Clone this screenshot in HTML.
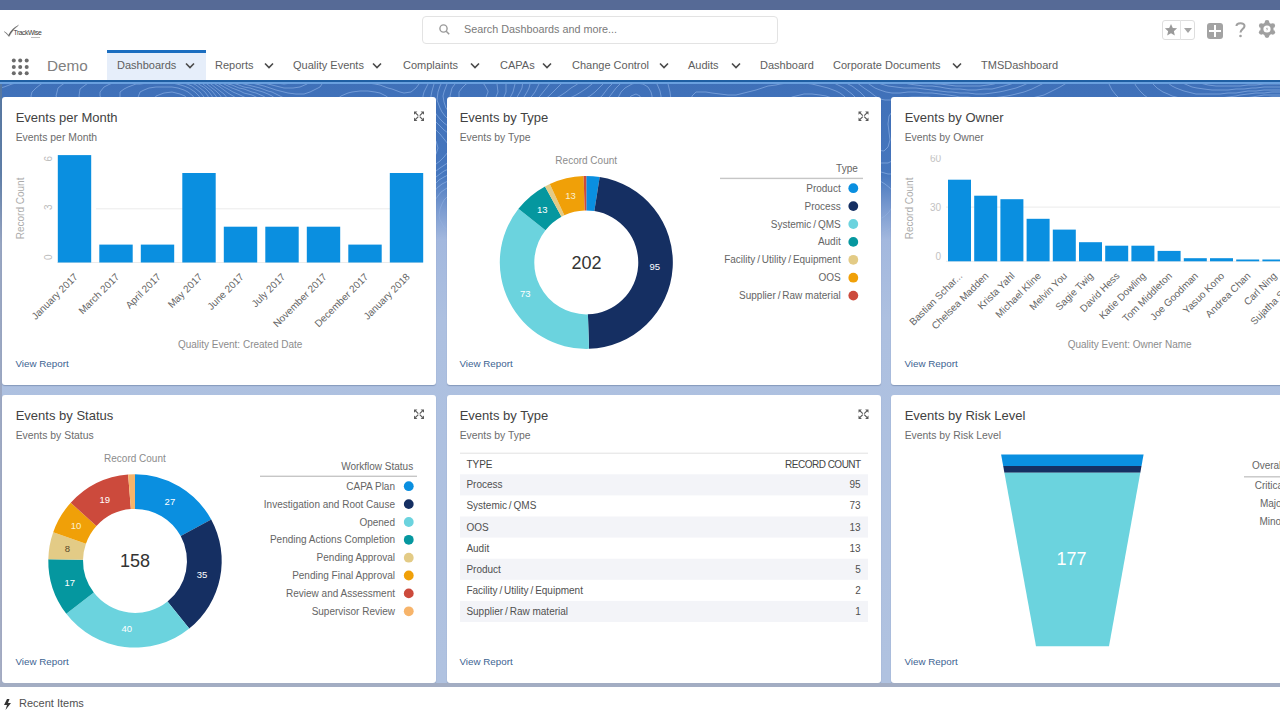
<!DOCTYPE html>
<html><head><meta charset="utf-8">
<style>
*{margin:0;padding:0;box-sizing:border-box}
html,body{width:1280px;height:720px;overflow:hidden;background:#fff;font-family:"Liberation Sans",sans-serif}
.a{position:absolute}
#top{left:0;top:0;width:1280px;height:10px;background:#566a96}
#hdr{left:0;top:10px;width:1280px;height:70px;background:#fff}
#bg{left:0;top:80px;width:1280px;height:603px;background:linear-gradient(180deg,#3f70b8 0px,#4677be 95px,#7c9cd1 130px,#a3b8de 160px,#adc0e0 240px,#b0c2e0 603px);overflow:hidden}
#navline{left:0;top:80px;width:1280px;height:2px;background:#1f5fa3}
#navline2{left:0;top:82px;width:1280px;height:2px;background:#69a0df}
.nv{top:59px;font-size:11px;color:#5e5e5e;white-space:nowrap;line-height:13px}
.chev{top:62px;width:10px;height:7px}
.card{background:#fff;border-radius:3px;box-shadow:0 1px 1px rgba(60,80,120,.35)}
.ttl{font-size:13px;color:#3b3b3b;white-space:nowrap;line-height:15px}
.sub{font-size:10.4px;color:#666;white-space:nowrap;line-height:12px}
.vr{font-size:10px;color:#2a6fb5;white-space:nowrap;line-height:12px}
.ex{width:10px;height:10px}
#foot{left:0;top:683px;width:1280px;height:37px;background:#fff;border-top:4px solid #a3adc3}
</style></head><body>
<div id="top" class="a"></div>
<div id="hdr" class="a"></div>
<div id="bg" class="a"><svg width="1280" height="200" style="position:absolute;left:0;top:0;-webkit-mask-image:linear-gradient(180deg,#000 0,#000 100px,transparent 160px)"><path d="M480 24 L485 20 L488 12 L488 11 L484 4 L480 2 L472 1 L466 4 L462 8 L459 12 L459 20 L462 24 L468 27 L476 26 L480 24 M458 152 L464 150 L468 147 L470 140 L469 132 L468 128 L464 120 L460 116 L456 114 L448 116 L444 120 L442 124 L440 129 L439 136 L440 140 L444 147 L448 150 L455 152 L458 152 M458 0 L455 4 L452 8 L450 16 L452 24 L454 28 L459 32 L464 34 L472 34 L479 32 L484 29 L488 27 L492 23 L496 17 L498 12 L497 4 L495 0 M480 160 L484 157 L488 152 L486 144 L484 139 L480 132 L478 128 L476 123 L472 117 L468 112 L464 108 L460 106 L452 106 L447 108 L441 112 L438 116 L435 120 L432 128 L431 132 L430 140 L432 148 L434 152 L438 156 L444 159 L448 161 L456 162 L464 163 L472 162 L480 160 M450 0 L447 4 L444 12 L443 16 L444 22 L446 28 L449 32 L453 36 L460 39 L464 40 L469 40 L476 39 L482 36 L488 33 L492 30 L496 27 L500 23 L504 17 L506 12 L506 4 M494 168 L500 166 L505 164 L511 160 L514 156 L513 148 L509 144 L504 141 L500 139 L496 136 L492 132 L488 128 L484 123 L480 117 L477 112 L473 108 L469 104 L464 101 L460 99 L452 99 L448 101 L442 104 L437 108 L434 112 L431 116 L428 122 L425 128 L424 132 L422 140 L422 148 L424 153 L428 158 L432 161 L437 164 L444 166 L450 168 L456 169 L464 170 L472 170 L480 170 L488 169 L494 168 M261 0 L268 1 L276 3 L284 4 L292 3 L300 1 M443 0 L440 6 L438 12 L437 20 L440 28 L442 32 L445 36 L449 40 L456 44 L460 45 L468 46 L475 44 L480 42 L484 40 L491 36 L496 32 L500 29 L504 26 L508 21 L511 16 L513 12 L515 4 M493 176 L500 175 L508 173 L512 172 L520 168 L524 166 L528 163 L532 160 L536 155 L538 148 L536 144 L530 140 L524 138 L520 136 L512 134 L508 132 L500 128 L496 125 L492 122 L488 117 L484 112 L481 108 L477 104 L473 100 L468 96 L464 94 L456 93 L448 95 L444 97 L439 100 L435 104 L431 108 L428 112 L424 118 L421 124 L419 128 L416 134 L414 140 L413 148 L416 156 L419 160 L424 163 L428 166 L433 168 L440 171 L445 172 L452 174 L460 175 L468 176 L472 176 L480 177 L488 176 L493 176 M249 0 L256 2 L264 3 L268 4 L276 6 L284 8 L288 8 L293 8 L300 7 L307 4 L312 0 M436 0 L434 4 L432 11 L431 16 L431 24 L433 28 L436 34 L440 39 L444 43 L448 46 L452 48 L460 51 L468 51 L476 49 L480 47 L485 44 L491 40 L496 37 L500 34 L504 31 L508 28 L512 24 L516 19 L520 12 L522 8 L523 0 M370 44 L376 41 L380 38 L382 32 L380 25 L376 22 L368 20 L360 21 L353 24 L349 28 L348 32 L348 36 L352 40 L359 44 L364 45 L370 44 M226 120 L228 116 L230 108 L230 100 L228 92 L225 88 L220 88 L216 90 L212 95 L210 100 L209 108 L212 116 L215 120 L220 123 L226 120 M506 180 L512 179 L520 176 L524 175 L530 172 L536 169 L540 166 L544 163 L548 159 L552 154 L555 148 L552 141 L548 138 L544 136 L536 133 L532 132 L524 130 L517 128 L512 126 L507 124 L500 120 L496 117 L492 113 L488 109 L484 104 L481 100 L477 96 L473 92 L468 89 L464 87 L456 87 L451 88 L444 91 L440 94 L436 97 L432 100 L428 104 L424 109 L420 115 L416 120 L414 124 L411 128 L408 134 L405 140 L404 144 L404 152 L406 156 L409 160 L414 164 L420 167 L424 169 L430 172 L436 174 L443 176 L448 177 L456 179 L462 180 L468 181 L476 182 L484 182 L492 182 L500 181 L506 180 M248 164 L251 156 L248 152 L242 152 L240 156 L241 160 L247 164 L248 164 M53 180 L59 176 L61 172 L59 168 L52 166 L44 166 L39 168 L33 172 L29 176 L27 180 L32 184 L40 183 L48 182 L53 180 M7 200 L8 196 L4 192 L0 192 M239 0 L244 1 L252 3 L256 4 L264 6 L270 8 L276 10 L284 12 L288 13 L296 14 L304 14 L310 12 L316 9 L320 7 L324 1 M430 0 L428 4 L424 12 L423 16 L423 24 L425 28 L428 33 L432 38 L436 42 L440 46 L444 50 L448 53 L453 56 L460 59 L468 59 L474 56 L480 52 L484 50 L488 47 L492 44 L497 40 L503 36 L508 32 L512 29 L516 26 L520 22 L524 17 L527 12 L529 8 L531 0 M373 52 L380 49 L384 46 L388 43 L392 38 L395 32 L394 24 L391 20 L386 16 L380 13 L375 12 L368 11 L360 11 L352 12 L348 13 L341 16 L336 20 L333 24 L331 28 L331 36 L333 40 L337 44 L344 48 L348 50 L354 52 L360 53 L368 53 L373 52 M250 172 L256 168 L259 164 L260 156 L257 148 L254 144 L250 140 L245 136 L241 132 L239 128 L237 120 L237 112 L237 104 L237 96 L236 89 L234 84 L231 80 L224 77 L218 80 L213 84 L210 88 L207 92 L204 100 L204 104 L204 112 L205 116 L208 123 L211 128 L215 132 L220 136 L223 140 L226 144 L228 149 L230 156 L232 161 L236 167 L240 170 L244 172 L250 172 M511 184 L516 183 L524 181 L528 179 L536 176 L540 174 L544 172 L550 168 L555 164 L559 160 L563 156 L566 152 L568 145 L568 144 L564 138 L560 135 L553 132 L548 131 L540 128 L536 127 L528 125 L523 124 L516 122 L511 120 L504 116 L500 113 L496 110 L492 105 L488 100 L485 96 L482 92 L478 88 L473 84 L468 80 L464 78 L456 79 L452 80 L446 84 L440 88 L436 91 L432 94 L428 98 L424 102 L420 107 L416 112 L412 116 L409 120 L406 124 L403 128 L400 132 L396 139 L394 144 L394 152 L396 156 L400 161 L404 164 L410 168 L416 171 L420 172 L428 175 L432 177 L440 179 L444 180 L452 182 L460 184 L464 185 L472 186 L480 186 L488 187 L496 186 L504 185 L511 184 M19 200 L23 196 L28 193 L32 191 L40 188 L44 187 L52 184 L56 183 L61 180 L65 176 L66 168 L61 164 L56 162 L48 162 L40 164 L36 165 L31 168 L25 172 L20 176 L16 179 L12 181 L4 183 L0 184 M1025 200 L1020 198 L1012 199 M232 0 L236 2 L244 4 L248 5 L256 7 L260 8 L268 11 L272 12 L280 16 L284 18 L288 21 L292 25 L294 32 L292 39 L291 44 L288 52 L287 56 L288 61 L296 62 L300 60 L305 56 L312 53 L316 52 L324 52 L328 52 L336 54 L341 56 L348 58 L356 60 L360 60 L367 60 L372 59 L380 57 L384 55 L388 52 L393 48 L398 44 L403 40 L408 36 L412 35 L417 36 L424 40 L428 43 L432 47 L436 50 L440 54 L444 59 L448 64 L449 68 L448 72 L444 77 L440 81 L436 84 L432 88 L428 92 L423 96 L419 100 L416 104 L412 108 L408 112 L404 116 L400 121 L396 124 L392 129 L388 133 L384 140 L383 144 L384 152 L386 156 L389 160 L394 164 L400 168 L404 170 L409 172 L416 175 L420 177 L428 179 L432 181 L440 183 L444 184 L452 186 L459 188 L464 189 L472 190 L480 191 L488 191 L496 191 L504 190 L512 188 L516 188 L524 185 L529 184 L536 181 L540 180 L548 176 L552 174 L556 172 L562 168 L567 164 L571 160 L574 156 L577 152 L580 144 L576 138 L572 135 L567 132 L560 129 L556 128 L548 126 L542 124 L536 123 L528 121 L524 119 L516 117 L512 115 L507 112 L502 108 L498 104 L495 100 L492 96 L488 91 L484 85 L480 80 L478 76 L476 70 L476 68 L480 60 L484 56 L488 52 L492 49 L496 45 L500 42 L504 39 L508 36 L514 32 L519 28 L524 24 L528 20 L532 16 L535 12 L537 8 L540 2 M422 0 L419 4 L416 8 L411 12 L404 13 L400 12 L392 9 L388 8 L380 5 L375 4 L368 3 L360 2 L352 1 L348 0 M252 176 L259 172 L262 168 L264 164 L265 156 L264 148 L263 144 L260 139 L256 134 L252 129 L248 124 L247 120 L245 112 L244 104 L244 96 L244 92 L242 84 L240 78 L236 73 L232 70 L224 70 L220 72 L214 76 L210 80 L207 84 L204 89 L201 96 L200 100 L199 108 L200 116 L201 120 L204 127 L207 132 L210 136 L214 140 L217 144 L220 149 L224 156 L226 160 L228 164 L232 170 L236 173 L242 176 L248 177 L252 176 M27 200 L32 196 L36 194 L41 192 L48 189 L52 188 L60 184 L64 182 L68 179 L72 172 L68 164 L64 161 L60 160 L52 159 L44 160 L40 161 L32 164 L28 166 L24 168 L18 172 L12 175 L8 177 L0 180 M1035 200 L1032 196 L1026 192 L1020 191 L1014 192 L1008 195 L1004 197 M226 0 L232 3 L236 4 L244 7 L250 8 L256 10 L263 12 L268 14 L272 16 L277 20 L280 24 L282 32 L280 40 L279 44 L276 51 L274 56 L272 62 L270 68 L269 76 L271 84 L274 88 L280 91 L288 89 L292 87 L296 84 L300 79 L304 75 L308 71 L312 68 L319 64 L324 63 L332 63 L340 64 L344 65 L352 66 L360 67 L368 67 L376 65 L380 64 L388 60 L392 57 L396 55 L400 52 L407 48 L412 46 L420 47 L424 49 L428 52 L432 56 L436 61 L438 68 L436 74 L432 80 L428 84 L424 88 L420 92 L416 96 L412 100 L408 104 L404 107 L400 111 L396 114 L392 117 L388 120 L383 124 L379 128 L376 132 L372 140 L372 144 L372 148 L376 156 L379 160 L384 164 L388 166 L392 169 L399 172 L404 174 L408 176 L416 179 L420 180 L428 183 L432 184 L440 187 L444 188 L452 191 L458 192 L464 194 L472 195 L480 196 L488 196 L496 195 L504 194 L512 193 L516 192 L524 190 L530 188 L536 186 L542 184 L548 182 L552 180 L560 176 L564 174 L568 171 L573 168 L578 164 L582 160 L585 156 L588 152 L590 144 L588 139 L584 135 L579 132 L572 129 L568 127 L560 125 L556 124 L548 121 L543 120 L536 118 L528 116 L524 115 L518 112 L512 109 L508 106 L504 102 L500 97 L496 92 L494 88 L491 84 L488 77 L486 72 L486 64 L488 60 L492 54 L496 50 L500 46 L504 43 L508 40 L514 36 L520 32 L524 29 L528 26 L532 23 L536 20 L540 16 L544 11 L548 6 L552 0 M408 0 L404 1 L396 1 L391 0 M1280 38 L1274 40 L1271 44 L1275 48 L1280 49 M251 180 L256 178 L260 176 L264 172 L268 165 L270 160 L270 152 L269 144 L268 139 L265 132 L263 128 L260 123 L256 116 L255 112 L254 104 L254 96 L254 88 L252 81 L250 76 L247 72 L243 68 L236 64 L232 63 L224 64 L220 66 L216 69 L212 72 L208 77 L204 82 L200 88 L198 92 L196 100 L195 104 L195 112 L196 117 L198 124 L200 129 L204 136 L207 140 L210 144 L213 148 L216 153 L220 160 L223 164 L225 168 L229 172 L234 176 L240 179 L244 180 L251 180 M845 128 L851 124 L854 120 L853 112 L849 108 L844 106 L836 104 L828 106 L822 108 L816 112 L813 116 L811 120 L812 124 L817 128 L824 130 L832 131 L840 130 L845 128 M34 200 L40 196 L44 194 L50 192 L56 189 L60 188 L67 184 L72 180 L75 176 L76 172 L76 168 L72 163 L68 160 L60 157 L52 156 L44 157 L36 159 L32 161 L26 164 L20 167 L16 169 L11 172 L4 175 M1041 200 L1040 196 L1036 190 L1032 186 L1027 184 L1020 183 L1016 184 L1009 188 L1004 191 L1000 195 L996 198 M221 0 L228 4 L232 5 L239 8 L244 9 L252 12 L256 13 L263 16 L268 19 L272 24 L274 28 L273 36 L272 40 L269 48 L266 52 L264 56 L260 60 L252 62 L246 60 L240 58 L232 56 L224 58 L220 61 L216 64 L211 68 L208 72 L204 76 L200 82 L196 88 L195 92 L192 100 L192 104 L192 112 L192 116 L194 124 L196 130 L199 136 L202 140 L204 144 L208 149 L212 155 L215 160 L218 164 L220 168 L224 172 L228 176 L234 180 L240 182 L248 183 L256 182 L260 180 L265 176 L268 172 L272 165 L274 160 L275 152 L276 144 L275 136 L275 128 L276 120 L278 116 L282 112 L287 108 L292 104 L296 101 L300 97 L304 92 L307 88 L310 84 L314 80 L319 76 L324 74 L332 72 L340 72 L348 74 L356 75 L364 75 L372 75 L380 72 L384 71 L389 68 L395 64 L400 61 L404 59 L411 56 L416 56 L420 57 L424 60 L428 67 L428 70 L426 76 L423 80 L420 84 L415 88 L411 92 L406 96 L401 100 L396 103 L392 106 L388 108 L382 112 L376 116 L372 119 L368 123 L364 128 L362 132 L361 140 L362 148 L364 152 L368 158 L372 161 L376 164 L382 168 L388 171 L392 173 L399 176 L404 178 L409 180 L416 182 L420 184 L428 187 L432 188 L440 191 L444 192 L452 195 L456 196 L464 199 L472 200 M494 200 L500 199 L508 198 L516 196 L520 195 L528 193 L532 192 L540 189 L544 188 L552 185 L556 183 L564 180 L568 178 L572 176 L578 172 L584 168 L588 164 L592 161 L596 156 L598 152 L600 148 L600 143 L596 137 L592 134 L588 131 L582 128 L576 126 L571 124 L564 122 L557 120 L552 119 L544 116 L540 115 L532 113 L528 111 L521 108 L516 105 L512 102 L508 98 L504 92 L501 88 L499 84 L496 78 L494 72 L493 64 L496 57 L499 52 L503 48 L508 44 L512 41 L516 38 L520 35 L525 32 L532 28 L536 25 L540 22 L544 20 L549 16 L553 12 L557 8 L561 4 L566 0 M1280 33 L1272 35 L1267 36 L1261 40 L1260 44 L1261 48 L1268 52 L1272 53 L1280 55 M849 136 L856 133 L860 130 L864 126 L867 120 L865 112 L863 108 L859 104 L852 100 L848 98 L840 97 L832 97 L824 100 L820 101 L815 104 L809 108 L804 112 L800 116 L798 120 L799 128 L803 132 L808 135 L812 136 L820 138 L828 139 L836 139 L844 137 L849 136 M41 200 L48 196 L52 194 L57 192 L64 189 L68 187 L72 184 L77 180 L80 174 L80 168 L78 164 L74 160 L68 157 L64 155 L56 154 L48 154 L40 156 L36 157 L28 160 L24 162 L20 164 L12 168 L8 170 L2 172 M1048 200 L1045 192 L1043 188 L1040 184 L1036 180 L1028 176 L1024 176 L1019 176 L1012 179 L1008 182 L1004 185 L1000 189 L996 193 L992 197 M217 0 L224 4 L228 6 L232 8 L240 11 L244 13 L252 15 L256 17 L261 20 L265 24 L267 32 L264 40 L262 44 L258 48 L252 51 L244 51 L236 50 L228 51 L224 53 L219 56 L215 60 L211 64 L207 68 L203 72 L200 76 L196 82 L193 88 L191 92 L189 100 L188 105 L188 112 L188 116 L190 124 L192 130 L194 136 L197 140 L200 146 L204 152 L207 156 L210 160 L213 164 L216 168 L220 173 L224 177 L229 180 L236 184 L240 185 L248 186 L256 185 L260 183 L265 180 L269 176 L272 172 L276 165 L278 160 L280 153 L281 148 L283 140 L284 136 L287 128 L290 124 L294 120 L298 116 L302 112 L306 108 L310 104 L313 100 L316 96 L320 91 L324 88 L332 84 L336 83 L344 84 L348 85 L356 87 L361 88 L368 90 L372 92 L372 96 L368 101 L364 105 L360 109 L356 114 L352 120 L351 124 L349 132 L349 140 L352 148 L354 152 L357 156 L361 160 L366 164 L372 168 L376 170 L380 172 L388 175 L392 177 L400 180 L404 182 L411 184 L416 186 L421 188 L428 191 L432 192 L440 196 L444 197 L450 200 M516 200 L520 199 L528 197 L532 195 L540 193 L544 192 L552 189 L556 188 L564 185 L568 183 L575 180 L580 178 L584 176 L590 172 L595 168 L600 164 L604 160 L607 156 L609 152 L610 144 L608 139 L604 135 L600 132 L592 128 L588 126 L582 124 L576 122 L570 120 L564 118 L556 116 L552 115 L544 112 L540 111 L532 108 L528 106 L524 104 L519 100 L515 96 L512 92 L508 86 L505 80 L503 76 L500 68 L500 64 L500 60 L504 53 L508 48 L512 45 L516 41 L520 39 L524 36 L531 32 L536 29 L540 27 L546 24 L552 20 L556 18 L560 16 L566 12 L571 8 L576 5 L580 2 M1280 30 L1272 31 L1266 32 L1260 34 L1256 36 L1252 40 L1251 48 L1256 52 L1260 54 L1265 56 L1272 57 L1280 59 M400 85 L392 85 L392 84 L396 79 L400 76 L407 72 L409 72 L408 79 L404 82 L400 85 M848 144 L852 143 L860 140 L864 138 L868 136 L872 132 L876 128 L879 120 L877 112 L874 108 L871 104 L865 100 L860 96 L856 94 L850 92 L844 90 L836 90 L829 92 L824 94 L819 96 L812 100 L808 102 L804 104 L798 108 L793 112 L789 116 L786 120 L785 128 L788 133 L792 136 L799 140 L804 142 L812 144 L816 145 L824 146 L832 146 L840 145 L848 144 M47 200 L52 197 L56 195 L64 192 L68 190 L72 188 L78 184 L82 180 L84 176 L84 168 L82 164 L79 160 L73 156 L68 154 L60 152 L56 152 L48 152 L44 152 L36 155 L32 156 L24 160 L20 162 L15 164 L8 167 L4 169 M1054 200 L1053 192 L1052 188 L1048 182 L1044 177 L1040 174 L1036 171 L1028 168 L1024 167 L1016 168 L1012 170 L1008 173 L1004 178 L1000 182 L996 187 L992 191 L988 195 L984 199 M213 0 L219 4 L224 7 L228 9 L233 12 L240 15 L244 17 L251 20 L256 24 L258 28 L257 36 L253 40 L248 42 L240 43 L232 44 L228 45 L224 48 L218 52 L214 56 L210 60 L206 64 L203 68 L199 72 L196 76 L192 82 L189 88 L187 92 L185 100 L184 108 L184 116 L186 124 L188 131 L190 136 L192 140 L196 147 L199 152 L202 156 L205 160 L208 165 L212 169 L216 174 L220 177 L224 180 L231 184 L236 186 L244 188 L248 188 L252 188 L260 186 L264 184 L269 180 L273 176 L276 172 L280 165 L283 160 L284 156 L288 148 L290 144 L292 140 L296 135 L300 131 L305 128 L312 124 L316 122 L324 122 L328 124 L332 131 L334 136 L337 140 L340 146 L344 151 L348 156 L352 160 L356 163 L360 165 L364 168 L372 172 L376 174 L381 176 L388 179 L392 181 L400 184 L404 185 L412 188 L416 190 L421 192 L428 195 L432 197 L437 200 M529 200 L536 198 L542 196 L548 194 L555 192 L560 190 L568 188 L572 186 L579 184 L584 182 L588 180 L596 176 L600 173 L604 171 L608 167 L612 164 L616 159 L620 153 L622 148 L620 141 L616 136 L612 133 L608 131 L602 128 L596 125 L592 124 L584 121 L580 120 L572 117 L568 116 L560 113 L556 112 L548 109 L544 108 L536 104 L532 102 L528 100 L524 96 L520 92 L516 86 L512 80 L510 76 L508 72 L505 64 L507 56 L509 52 L513 48 L517 44 L523 40 L528 37 L532 35 L538 32 L544 29 L548 27 L555 24 L560 22 L565 20 L572 17 L576 15 L581 12 L587 8 L592 4 L596 1 M841 48 L844 44 L846 36 L844 28 L841 24 L836 20 L832 18 L826 16 L820 15 L812 14 L804 14 L796 16 L792 17 L787 20 L786 28 L789 32 L795 36 L800 38 L804 41 L810 44 L816 47 L820 48 L828 51 L836 51 L841 48 M1280 27 L1272 27 L1268 28 L1260 30 L1254 32 L1248 35 L1244 39 L1241 44 L1244 51 L1248 54 L1252 56 L1260 59 L1266 60 L1272 61 L1280 62 M980 104 L983 96 L982 88 L981 80 L980 76 L978 68 L976 64 L972 58 L968 54 L964 51 L960 48 L952 44 L948 43 L940 41 L932 40 L924 43 L920 48 L919 52 L919 60 L920 64 L922 72 L924 77 L928 84 L931 88 L936 92 L940 94 L944 96 L952 99 L956 100 L964 103 L969 104 L976 105 L980 104 M848 152 L852 151 L860 149 L864 148 L872 144 L876 142 L880 139 L885 136 L889 132 L892 127 L895 120 L893 112 L890 108 L885 104 L880 101 L876 98 L872 96 L865 92 L860 89 L856 87 L848 84 L844 83 L836 84 L832 85 L824 88 L820 90 L816 92 L809 96 L804 99 L800 101 L795 104 L789 108 L784 111 L780 114 L776 118 L772 123 L770 128 L772 133 L776 137 L780 140 L787 144 L792 146 L798 148 L804 150 L812 151 L816 152 L824 153 L832 153 L840 153 L848 152 M54 200 L60 197 L64 195 L70 192 L76 189 L80 186 L84 183 L88 177 L89 172 L88 167 L84 161 L80 157 L76 155 L70 152 L64 150 L56 149 L48 150 L40 151 L36 152 L28 155 L24 157 L18 160 L12 163 L8 164 L0 167 M1062 200 L1061 192 L1060 186 L1056 180 L1053 176 L1049 172 L1044 168 L1040 165 L1036 162 L1032 160 L1024 157 L1020 156 L1016 156 L1009 160 L1005 164 L1003 168 L1000 172 L996 178 L992 184 L989 188 L985 192 L981 196 L977 200 M867 200 L860 197 L856 196 L848 195 L840 195 L832 196 L828 197 L824 200 M209 0 L215 4 L220 7 L224 10 L228 13 L233 16 L239 20 L243 24 L245 28 L242 32 L236 35 L232 37 L227 40 L222 44 L217 48 L213 52 L209 56 L206 60 L202 64 L198 68 L195 72 L192 76 L188 82 L185 88 L183 92 L181 100 L180 108 L181 116 L182 124 L184 132 L186 136 L188 142 L191 148 L194 152 L196 156 L200 161 L204 166 L208 171 L212 175 L216 178 L220 181 L225 184 L232 187 L236 189 L244 190 L252 190 L260 188 L264 186 L268 184 L273 180 L277 176 L280 172 L284 166 L288 160 L291 156 L293 152 L297 148 L302 144 L308 141 L316 141 L323 144 L328 147 L332 151 L336 154 L340 158 L344 161 L349 164 L355 168 L360 170 L364 172 L372 176 L376 178 L382 180 L388 182 L392 184 L400 187 L404 189 L411 192 L416 194 L420 196 L426 200 M541 200 L548 198 L555 196 L560 194 L568 192 L572 191 L580 188 L584 187 L592 184 L596 182 L602 180 L608 177 L612 174 L616 172 L621 168 L625 164 L629 160 L632 156 L634 148 L632 141 L628 137 L624 134 L620 132 L613 128 L608 126 L603 124 L596 121 L592 120 L584 117 L580 116 L572 113 L568 112 L560 109 L556 108 L548 105 L544 103 L539 100 L534 96 L530 92 L527 88 L524 84 L520 79 L516 74 L512 68 L511 64 L512 56 L514 52 L517 48 L522 44 L528 40 L532 38 L536 36 L544 32 L548 31 L555 28 L560 26 L568 24 L572 23 L580 20 L584 19 L590 16 L595 12 L599 8 L603 4 L607 0 M1070 200 L1072 192 L1070 184 L1068 180 L1064 176 L1060 172 L1056 168 L1051 164 L1046 160 L1041 156 L1036 152 L1032 149 L1028 145 L1024 141 L1021 136 L1020 132 L1020 124 L1020 119 L1021 112 L1022 104 L1021 96 L1020 91 L1018 84 L1016 79 L1013 72 L1010 68 L1008 64 L1004 60 L1000 56 L995 52 L989 48 L984 46 L980 44 L972 41 L968 40 L960 37 L956 36 L948 34 L940 33 L936 32 L928 32 L924 32 L916 36 L912 40 L910 44 L909 52 L909 60 L909 68 L909 76 L908 83 L906 88 L901 92 L896 94 L888 94 L881 92 L876 90 L871 88 L864 84 L860 82 L856 79 L850 76 L844 72 L840 68 L844 63 L848 57 L851 52 L853 48 L855 40 L855 32 L852 24 L848 20 L844 16 L840 13 L836 11 L828 8 L824 7 L816 5 L812 4 L804 3 L796 3 L788 3 L780 4 L776 5 L768 6 L762 8 L756 10 L748 12 L744 13 L736 15 L728 15 L720 14 L712 13 L706 12 L700 12 L696 12 L692 16 L692 24 L696 26 L704 27 L712 26 L720 26 L728 25 L736 25 L744 27 L748 28 L756 30 L761 32 L768 34 L773 36 L780 38 L784 40 L792 43 L796 45 L803 48 L808 50 L812 52 L819 56 L824 59 L828 62 L832 64 L840 68 L835 72 L831 76 L825 80 L820 84 L816 87 L812 89 L807 92 L801 96 L796 99 L792 101 L786 104 L780 108 L776 110 L772 112 L766 116 L760 120 L756 124 L754 128 L755 136 L759 140 L764 144 L768 146 L773 148 L780 151 L784 152 L792 155 L796 157 L804 159 L808 160 L816 162 L824 164 L828 165 L836 165 L844 165 L849 164 L856 163 L864 160 L868 159 L875 156 L880 154 L884 152 L892 148 L896 146 L900 144 L907 140 L912 137 L916 135 L924 133 L929 132 L936 131 L944 132 L952 132 L956 132 L964 133 L972 135 L976 136 L984 140 L988 142 L992 146 L995 152 L995 160 L994 168 L992 173 L988 180 L985 184 L982 188 L978 192 L974 196 L969 200 M1280 24 L1272 25 L1264 26 L1256 28 L1252 29 L1245 32 L1240 35 L1236 38 L1232 43 L1231 48 L1234 52 L1239 56 L1244 58 L1250 60 L1256 61 L1264 63 L1272 64 L1276 64 M60 200 L68 196 L72 194 L76 192 L83 188 L88 184 L91 180 L93 176 L93 168 L91 164 L88 160 L84 156 L77 152 L72 150 L65 148 L60 147 L52 147 L44 148 L40 149 L32 151 L28 153 L21 156 L16 158 L12 160 L4 163 L0 165 M906 200 L902 196 L896 192 L892 190 L887 188 L880 186 L875 184 L868 182 L860 180 L856 179 L848 178 L840 178 L832 179 L828 180 L820 182 L816 184 L809 188 L805 192 L802 196 M205 0 L211 4 L216 8 L220 11 L224 14 L228 19 L231 24 L228 32 L224 36 L220 40 L216 44 L213 48 L209 52 L205 56 L202 60 L198 64 L194 68 L191 72 L188 76 L184 81 L180 88 L178 92 L176 100 L176 104 L176 112 L176 116 L178 124 L180 132 L181 136 L184 144 L186 148 L188 152 L192 159 L196 164 L199 168 L203 172 L208 176 L212 179 L216 182 L220 184 L228 188 L232 190 L240 192 L244 192 L252 192 L256 192 L264 189 L268 187 L272 184 L277 180 L281 176 L284 172 L288 168 L292 163 L296 159 L300 156 L308 152 L316 153 L324 155 L328 157 L332 160 L339 164 L344 167 L348 169 L354 172 L360 175 L364 176 L372 180 L376 181 L383 184 L388 186 L393 188 L400 191 L404 193 L410 196 L416 200 M553 200 L560 198 L568 196 L572 195 L580 193 L584 192 L592 189 L596 188 L604 185 L608 184 L616 181 L620 179 L625 176 L632 172 L636 169 L640 166 L644 162 L648 157 L651 152 L650 144 L647 140 L641 136 L636 133 L632 131 L625 128 L620 126 L615 124 L608 122 L603 120 L596 118 L591 116 L584 114 L579 112 L572 109 L568 108 L560 105 L556 103 L551 100 L545 96 L541 92 L537 88 L533 84 L529 80 L525 76 L522 72 L519 68 L516 60 L516 60 L519 52 L522 48 L527 44 L532 41 L536 39 L542 36 L548 34 L553 32 L560 30 L568 28 L572 27 L580 26 L587 24 L592 22 L597 20 L602 16 L605 12 L608 8 L612 4 M666 0 L668 4 L670 12 L671 20 L671 28 L672 32 L676 36 L684 39 L692 40 L700 40 L708 39 L716 38 L724 38 L732 38 L740 38 L748 38 L756 39 L761 40 L768 41 L776 43 L780 45 L788 47 L792 49 L799 52 L804 55 L808 57 L812 60 L817 64 L820 72 L816 79 L812 83 L808 86 L804 89 L800 92 L793 96 L788 98 L784 101 L777 104 L772 106 L768 108 L760 112 L756 113 L750 116 L744 119 L740 122 L736 124 L732 128 L730 136 L732 140 L736 144 L743 148 L748 150 L752 152 L760 155 L764 157 L772 160 L776 162 L781 164 L787 168 L790 172 L790 180 L788 185 L786 192 L787 200 M1083 200 L1085 196 L1087 188 L1084 181 L1080 177 L1076 173 L1072 170 L1068 167 L1064 164 L1058 160 L1053 156 L1049 152 L1045 148 L1042 144 L1039 140 L1036 132 L1037 124 L1039 116 L1041 112 L1044 105 L1047 100 L1048 96 L1050 88 L1050 80 L1048 72 L1047 68 L1044 63 L1040 58 L1036 54 L1032 51 L1027 48 L1020 45 L1016 43 L1008 41 L1004 40 L996 38 L988 36 L984 35 L976 34 L968 32 L964 31 L956 30 L948 28 L944 27 L936 26 L928 26 L920 27 L914 28 L908 31 L904 35 L901 40 L900 47 L900 52 L900 56 L900 64 L900 68 L897 76 L894 80 L888 83 L880 83 L872 80 L868 78 L864 75 L860 70 L858 64 L859 56 L861 52 L863 44 L864 38 L864 35 L863 28 L860 23 L856 18 L852 14 L848 11 L844 8 L836 4 L832 2 L827 0 M1280 22 L1272 22 L1264 23 L1259 24 L1252 26 L1244 28 L1240 30 L1234 32 L1228 36 L1224 39 L1221 44 L1219 48 L1220 52 L1224 56 L1232 60 L1236 61 L1244 63 L1250 64 L1256 65 L1264 66 L1272 67 L1280 68 M67 200 L72 198 L76 196 L83 192 L88 189 L92 186 L96 181 L98 176 L98 168 L96 164 L92 159 L88 155 L83 152 L76 149 L72 147 L64 145 L56 145 L48 145 L40 147 L35 148 L28 151 L24 152 L16 156 L12 158 L6 160 L0 162 M960 197 L952 199 L944 199 L939 196 L934 192 L931 188 L928 184 L924 176 L923 172 L924 168 L928 163 L932 160 L938 156 L944 153 L948 152 L956 150 L964 150 L972 151 L976 153 L980 156 L984 163 L984 168 L984 172 L980 180 L977 184 L973 188 L968 192 L964 195 L960 197 M0 8 L4 7 L12 4 L16 3 L24 0 M201 0 L207 4 L212 8 L216 11 L220 15 L223 20 L224 24 L223 28 L220 34 L216 39 L212 44 L208 48 L205 52 L201 56 L197 60 L193 64 L190 68 L186 72 L182 76 L179 80 L176 86 L173 92 L172 96 L171 104 L171 112 L172 120 L173 124 L175 132 L176 137 L178 144 L180 148 L184 156 L186 160 L189 164 L193 168 L197 172 L202 176 L208 180 L212 182 L216 185 L222 188 L228 190 L233 192 L240 194 L248 195 L256 194 L263 192 L268 190 L272 187 L276 184 L281 180 L285 176 L289 172 L294 168 L299 164 L304 162 L312 160 L320 161 L327 164 L332 166 L336 168 L344 172 L348 173 L354 176 L360 178 L364 180 L372 183 L376 185 L384 188 L388 190 L393 192 L400 196 L404 199 M652 0 L657 4 L660 11 L661 16 L661 24 L661 32 L664 40 L668 43 L672 45 L680 46 L688 47 L696 46 L704 45 L712 45 L720 44 L724 44 L732 43 L740 43 L748 44 L752 44 L760 45 L768 46 L775 48 L780 50 L787 52 L792 54 L796 56 L803 60 L807 64 L810 68 L810 76 L807 80 L803 84 L798 88 L792 92 L788 94 L784 96 L776 100 L772 102 L766 104 L760 106 L754 108 L748 110 L741 112 L736 114 L729 116 L724 118 L719 120 L712 124 L708 126 L704 128 L698 132 L692 135 L688 136 L680 137 L672 136 L668 136 L660 134 L654 132 L648 130 L641 128 L636 127 L628 124 L624 123 L616 120 L612 119 L604 116 L600 115 L592 112 L588 111 L580 108 L576 106 L570 104 L564 101 L560 98 L556 95 L552 92 L548 88 L544 84 L539 80 L534 76 L529 72 L525 68 L522 64 L521 56 L524 51 L528 47 L532 44 L540 40 L544 38 L550 36 L556 34 L564 32 L568 32 L576 30 L584 29 L592 28 L596 27 L603 24 L607 20 L610 16 L613 12 L616 8 L620 4 L625 0 M1112 200 L1111 196 L1108 188 L1106 184 L1103 180 L1098 176 L1093 172 L1088 169 L1084 166 L1080 164 L1074 160 L1068 156 L1064 153 L1060 149 L1056 145 L1053 140 L1052 136 L1052 128 L1054 124 L1057 120 L1061 116 L1067 112 L1072 110 L1077 108 L1084 106 L1092 105 L1096 104 L1104 103 L1112 102 L1120 101 L1128 100 L1132 99 L1140 96 L1144 94 L1148 92 L1152 88 L1156 82 L1159 76 L1156 70 L1152 68 L1144 64 L1140 63 L1132 60 L1128 59 L1122 56 L1116 53 L1112 51 L1107 48 L1100 44 L1096 41 L1092 38 L1088 36 L1080 32 L1076 31 L1068 29 L1060 29 L1052 29 L1044 29 L1036 30 L1028 30 L1020 30 L1012 30 L1004 30 L996 29 L988 29 L982 28 L976 27 L968 26 L960 25 L954 24 L948 23 L940 22 L932 21 L924 21 L916 22 L908 23 L904 25 L897 28 L892 32 L889 36 L888 44 L889 52 L890 60 L888 67 L884 71 L876 70 L872 67 L870 60 L872 52 L873 48 L876 40 L876 36 L875 32 L872 26 L868 21 L864 16 L860 12 L856 9 L852 6 L848 4 L842 0 M1280 19 L1272 20 L1268 20 L1260 21 L1252 22 L1245 24 L1240 26 L1233 28 L1228 30 L1223 32 L1216 36 L1212 39 L1208 42 L1204 46 L1200 51 L1199 56 L1204 60 L1208 61 L1216 63 L1220 64 L1228 65 L1236 66 L1244 67 L1252 68 L1256 68 L1264 69 L1272 70 L1280 70 M75 200 L80 198 L84 196 L91 192 L96 189 L100 185 L103 180 L104 176 L104 171 L101 164 L99 160 L95 156 L89 152 L84 149 L80 147 L72 144 L68 143 L60 142 L52 142 L44 143 L40 144 L32 147 L28 148 L20 152 L16 154 L11 156 L4 159 M567 200 L572 199 L580 197 L584 196 L592 194 L600 192 L604 191 L612 189 L616 188 L624 185 L628 183 L636 180 L640 178 L644 176 L652 172 L656 170 L660 168 L666 164 L672 161 L676 159 L683 156 L688 155 L696 154 L704 155 L712 156 L716 157 L724 158 L730 160 L736 162 L744 164 L748 166 L753 168 L760 172 L764 176 L767 180 L769 184 L771 192 L773 196 M960 180 L956 177 L956 175 L960 170 L968 171 L968 174 L964 179 L960 180 M0 58 L8 57 L16 57 L23 56 L28 55 L35 52 L39 48 L39 40 L36 34 L33 28 L32 24 L31 16 L32 12 L36 8 L41 4 L48 0 M197 0 L203 4 L208 8 L212 11 L216 16 L218 20 L218 28 L216 33 L212 39 L208 44 L204 48 L201 52 L197 56 L193 60 L189 64 L184 68 L180 72 L176 76 L173 80 L170 84 L168 88 L165 96 L164 104 L165 112 L166 120 L168 128 L169 132 L171 140 L172 144 L175 152 L177 156 L180 163 L184 168 L188 172 L192 175 L196 177 L201 180 L208 184 L212 186 L217 188 L224 191 L228 193 L236 195 L241 196 L248 197 L256 196 L260 195 L268 192 L272 190 L276 187 L281 184 L286 180 L290 176 L296 172 L300 169 L304 168 L312 167 L320 168 L324 169 L332 171 L336 173 L344 176 L348 177 L355 180 L360 182 L365 184 L372 187 L376 188 L384 192 L388 194 L392 197 L396 200 M676 124 L668 125 L660 125 L652 124 L648 123 L640 122 L632 120 L628 119 L620 117 L616 116 L608 113 L603 112 L596 109 L592 108 L584 105 L580 103 L575 100 L569 96 L565 92 L561 88 L556 84 L552 81 L548 79 L543 76 L537 72 L532 68 L528 64 L526 60 L528 53 L532 48 L536 45 L540 43 L547 40 L552 38 L560 36 L564 35 L572 34 L580 33 L588 33 L595 32 L600 31 L608 29 L612 26 L616 21 L619 16 L621 12 L625 8 L632 4 L636 3 L643 4 L648 7 L651 12 L652 16 L652 24 L651 28 L651 36 L652 40 L656 46 L660 49 L668 52 L672 52 L680 53 L688 52 L692 52 L700 51 L708 50 L716 49 L724 48 L730 48 L736 48 L744 48 L748 48 L756 49 L764 50 L772 52 L776 53 L784 55 L788 57 L793 60 L799 64 L802 68 L802 76 L800 80 L796 84 L791 88 L784 92 L780 94 L775 96 L768 99 L764 100 L756 103 L751 104 L744 106 L736 107 L732 108 L724 110 L716 112 L712 113 L704 116 L700 117 L692 120 L688 121 L680 124 L676 124 M1071 0 L1065 4 L1060 7 L1056 9 L1050 12 L1044 15 L1040 16 L1032 18 L1025 20 L1020 21 L1012 22 L1004 23 L996 23 L988 23 L980 22 L972 22 L964 21 L956 20 L952 20 L944 18 L936 18 L928 17 L920 17 L912 17 L904 18 L896 19 L892 20 L885 20 L880 19 L875 16 L870 12 L864 8 L860 5 L856 2 M1280 17 L1272 17 L1264 18 L1256 19 L1249 20 L1244 21 L1236 23 L1232 24 L1224 26 L1219 28 L1212 30 L1207 32 L1200 34 L1195 36 L1188 38 L1180 40 L1173 40 L1168 40 L1164 40 L1156 39 L1148 36 L1144 35 L1137 32 L1132 29 L1128 26 L1124 23 L1120 19 L1116 15 L1112 10 L1109 4 L1107 0 M1151 200 L1144 198 L1140 196 L1133 192 L1128 188 L1124 184 L1120 180 L1116 176 L1112 172 L1108 168 L1104 165 L1100 162 L1096 160 L1090 156 L1084 152 L1080 149 L1076 146 L1072 140 L1071 136 L1073 132 L1078 128 L1084 125 L1089 124 L1096 123 L1104 122 L1112 121 L1120 121 L1128 120 L1132 120 L1140 118 L1148 116 L1152 114 L1156 112 L1162 108 L1167 104 L1171 100 L1174 96 L1178 92 L1182 88 L1186 84 L1192 80 L1196 78 L1200 76 L1208 73 L1213 72 L1220 71 L1228 70 L1236 70 L1244 70 L1252 71 L1260 71 L1268 72 L1272 72 L1280 73 M86 200 L92 197 L96 195 L101 192 L106 188 L109 184 L112 176 L110 168 L108 164 L104 159 L100 155 L96 152 L90 148 L84 145 L80 144 L72 141 L66 140 L60 139 L52 139 L48 140 L40 142 L33 144 L28 146 L23 148 L16 151 L12 153 L4 156 L0 157 M584 200 L588 199 L596 198 L604 196 L608 195 L616 193 L622 192 L628 190 L636 188 L640 187 L648 184 L652 183 L659 180 L664 178 L672 176 L676 175 L684 173 L691 172 L696 171 L704 171 L712 172 L716 172 L724 173 L732 175 L736 177 L743 180 L748 184 L752 187 L756 191 L760 196 L764 200 M0 69 L8 69 L16 70 L24 71 L32 72 L36 72 L44 72 L52 72 L58 72 L64 71 L72 70 L79 68 L84 66 L88 62 L89 56 L87 52 L83 48 L79 44 L75 40 L71 36 L67 32 L63 28 L60 24 L56 16 L58 8 L63 4 L68 2 M191 0 L196 2 L200 5 L205 8 L209 12 L212 16 L214 24 L212 32 L210 36 L207 40 L204 44 L200 48 L196 52 L192 56 L187 60 L182 64 L177 68 L172 72 L168 75 L164 78 L160 82 L156 88 L155 92 L155 100 L156 108 L157 112 L158 120 L160 126 L161 132 L163 140 L164 144 L166 152 L168 160 L170 164 L173 168 L177 172 L183 176 L188 178 L192 180 L200 184 L204 185 L210 188 L216 190 L220 192 L228 195 L232 196 L240 198 L248 199 L256 198 L264 196 L268 195 L273 192 L280 188 L284 185 L288 182 L292 179 L297 176 L304 173 L311 172 L314 172 L320 173 L328 174 L333 176 L340 178 L345 180 L352 183 L356 184 L364 187 L368 189 L375 192 L380 195 L384 198 M1048 0 L1042 4 L1036 7 L1032 9 L1024 12 L1020 13 L1012 15 L1007 16 L1000 17 L992 18 L984 18 L976 18 L968 17 L960 17 L955 16 L948 15 L940 14 L932 13 L924 13 L916 12 L908 12 L900 13 L892 13 L886 12 L880 10 L875 8 L869 4 L864 1 M1280 15 L1272 15 L1264 15 L1258 16 L1252 17 L1244 18 L1236 19 L1232 20 L1224 22 L1216 23 L1212 24 L1204 26 L1196 27 L1188 28 L1180 28 L1172 27 L1164 25 L1160 24 L1152 20 L1148 18 L1144 15 L1140 11 L1136 6 L1133 0 M672 116 L664 117 L656 118 L648 117 L640 116 L636 116 L628 114 L620 112 L616 111 L608 109 L604 107 L596 104 L592 102 L588 100 L583 96 L580 92 L576 88 L572 84 L564 80 L560 78 L555 76 L548 73 L544 71 L539 68 L534 64 L532 60 L532 55 L536 49 L540 46 L544 44 L552 41 L556 40 L564 38 L572 37 L580 36 L588 36 L593 36 L600 36 L608 35 L616 33 L620 32 L624 28 L628 20 L631 16 L636 14 L640 16 L641 24 L639 28 L638 36 L640 41 L643 48 L647 52 L652 56 L656 58 L664 59 L672 59 L680 58 L688 57 L696 56 L700 55 L708 54 L716 53 L724 52 L729 52 L736 52 L744 52 L749 52 L756 53 L764 54 L772 56 L776 57 L784 60 L788 63 L792 66 L796 72 L793 80 L789 84 L784 87 L780 90 L775 92 L768 95 L764 96 L756 98 L749 100 L744 101 L736 102 L728 104 L724 104 L716 105 L708 107 L702 108 L696 110 L688 112 L684 113 L676 115 L672 116 M1171 200 L1164 198 L1159 196 L1152 193 L1148 190 L1144 188 L1139 184 L1135 180 L1131 176 L1128 172 L1124 167 L1120 162 L1116 156 L1113 152 L1112 148 L1112 144 L1117 140 L1124 137 L1128 136 L1136 133 L1140 132 L1148 130 L1152 128 L1160 124 L1164 122 L1168 119 L1172 115 L1176 110 L1180 105 L1184 100 L1188 96 L1192 92 L1196 88 L1200 85 L1204 83 L1210 80 L1216 78 L1223 76 L1228 75 L1236 74 L1244 74 L1252 74 L1260 74 L1268 74 L1276 75 M101 200 L108 196 L112 194 L116 190 L120 186 L123 180 L122 172 L120 168 L116 163 L112 158 L108 155 L104 152 L98 148 L92 145 L88 143 L81 140 L76 138 L68 137 L60 136 L52 136 L44 138 L36 140 L32 142 L27 144 L20 147 L16 149 L9 152 L4 154 M609 200 L616 199 L624 197 L631 196 L636 195 L644 193 L648 192 L656 189 L661 188 L668 186 L676 184 L680 184 L688 183 L696 182 L704 182 L712 183 L720 184 L724 185 L732 188 L736 189 L741 192 L747 196 L752 200 M184 0 L192 3 L196 5 L200 8 L205 12 L208 16 L210 24 L208 32 L205 36 L203 40 L199 44 L195 48 L191 52 L186 56 L180 60 L176 62 L172 64 L164 67 L156 68 L148 67 L140 64 L136 62 L132 60 L126 56 L121 52 L116 49 L112 46 L108 43 L104 40 L98 36 L93 32 L88 28 L84 24 L80 20 L79 16 L80 9 L84 6 L88 3 L96 0 M1033 0 L1028 3 L1024 5 L1016 8 L1012 9 L1004 11 L999 12 L992 13 L984 14 L976 14 L968 13 L960 13 L952 12 L948 12 L940 11 L932 10 L924 9 L916 8 L908 8 L904 8 L896 7 L888 6 L881 4 L876 2 M1280 12 L1272 12 L1264 13 L1256 13 L1248 14 L1240 15 L1236 16 L1228 17 L1220 18 L1212 19 L1204 20 L1196 20 L1188 19 L1180 18 L1172 16 L1168 14 L1163 12 L1157 8 L1153 4 L1150 0 M664 109 L656 110 L648 110 L640 110 L632 109 L627 108 L620 106 L613 104 L608 101 L604 99 L600 96 L597 88 L595 84 L588 80 L584 79 L576 77 L572 76 L564 74 L558 72 L552 70 L548 68 L541 64 L538 60 L539 52 L543 48 L548 46 L552 44 L560 42 L568 40 L572 40 L580 39 L588 39 L596 40 L600 40 L608 41 L616 42 L624 44 L628 47 L632 52 L634 56 L636 62 L640 67 L644 68 L652 69 L660 68 L664 68 L672 66 L680 65 L684 64 L692 62 L700 60 L704 59 L712 58 L720 57 L726 56 L732 56 L740 55 L748 56 L753 56 L760 57 L768 59 L772 60 L780 64 L784 67 L788 72 L785 80 L781 84 L776 87 L772 89 L764 92 L760 93 L752 95 L748 96 L740 97 L732 98 L724 99 L716 100 L712 100 L704 101 L696 102 L688 103 L683 104 L676 106 L668 108 L664 109 M0 76 L8 77 L16 78 L24 80 L28 81 L36 82 L43 84 L48 85 L56 86 L64 86 L72 86 L80 86 L88 86 L96 87 L104 87 L108 88 L116 90 L122 92 L128 95 L132 98 L136 101 L140 106 L143 112 L145 116 L148 123 L149 128 L151 136 L151 144 L150 152 L148 157 L144 161 L136 161 L132 159 L125 156 L120 153 L116 151 L111 148 L104 145 L100 143 L94 140 L88 137 L83 136 L76 134 L68 132 L60 132 L52 133 L44 134 L39 136 L32 139 L28 141 L21 144 L16 146 L12 148 L4 151 L0 153 M1190 200 L1184 198 L1176 196 L1172 195 L1166 192 L1160 189 L1156 187 L1152 184 L1148 180 L1144 176 L1140 170 L1137 164 L1136 156 L1140 149 L1144 145 L1148 143 L1153 140 L1160 136 L1164 134 L1168 131 L1172 128 L1176 124 L1180 119 L1184 114 L1188 108 L1190 104 L1194 100 L1197 96 L1201 92 L1207 88 L1212 85 L1216 83 L1224 80 L1228 79 L1236 78 L1244 77 L1252 77 L1260 77 L1268 77 L1276 78 M122 200 L127 196 L132 192 L136 188 L140 185 L144 182 L148 180 L156 178 L164 178 L172 180 L176 181 L184 183 L189 184 L196 186 L202 188 L208 190 L214 192 L220 194 L225 196 L232 198 L240 200 M259 200 L264 199 L271 196 L276 193 L280 191 L285 188 L291 184 L296 181 L300 179 L308 177 L316 177 L324 178 L332 180 L336 181 L344 183 L348 185 L356 188 L360 189 L366 192 L372 195 L376 199 M640 200 L644 199 L652 197 L657 196 L664 194 L672 193 L676 192 L684 191 L692 190 L700 190 L708 190 L716 192 L720 193 L728 195 L732 197 L739 200 M1280 194 L1273 196 L1268 198 L1260 200 M173 0 L180 2 L187 4 L192 6 L196 9 L200 12 L204 17 L206 24 L204 31 L201 36 L198 40 L194 44 L189 48 L184 52 L180 54 L175 56 L168 58 L160 58 L153 56 L148 54 L144 52 L137 48 L132 45 L128 42 L124 39 L120 36 L114 32 L109 28 L105 24 L102 20 L100 16 L100 12 L104 7 L110 4 L116 2 L124 1 M1020 0 L1016 2 L1011 4 L1004 6 L996 8 L992 9 L984 9 L976 10 L968 10 L960 9 L952 9 L945 8 L940 7 L932 6 L924 6 L916 5 L909 4 L904 3 L896 2 L888 1 M1280 10 L1272 10 L1264 10 L1256 11 L1248 11 L1242 12 L1236 13 L1228 13 L1220 14 L1212 14 L1204 14 L1196 14 L1188 12 L1184 11 L1176 8 L1172 6 L1168 3 M608 68 L600 71 L592 72 L584 72 L576 71 L568 70 L560 68 L556 67 L550 64 L545 60 L544 56 L545 52 L551 48 L556 46 L563 44 L568 43 L576 43 L584 43 L592 43 L597 44 L604 46 L611 48 L616 51 L618 56 L616 63 L612 66 L608 68 M656 96 L648 98 L640 98 L634 96 L636 92 L644 90 L652 88 L656 87 L661 84 L668 80 L672 77 L676 75 L681 72 L688 69 L692 68 L700 65 L704 64 L712 62 L720 61 L725 60 L732 59 L740 59 L748 59 L754 60 L760 61 L768 63 L772 65 L776 68 L779 76 L776 81 L772 84 L764 88 L760 89 L752 91 L748 92 L740 93 L732 94 L724 94 L716 94 L708 94 L700 94 L692 94 L684 94 L676 93 L668 94 L660 95 L656 96 M1220 200 L1216 200 L1208 199 L1200 198 L1193 196 L1188 194 L1181 192 L1176 190 L1172 188 L1165 184 L1160 180 L1156 176 L1154 172 L1152 167 L1152 160 L1153 156 L1157 152 L1161 148 L1166 144 L1172 140 L1176 137 L1180 133 L1184 128 L1186 124 L1189 120 L1192 114 L1195 108 L1198 104 L1201 100 L1205 96 L1210 92 L1216 88 L1220 86 L1225 84 L1232 82 L1240 80 L1244 80 L1252 79 L1260 79 L1268 79 L1276 80 L1280 80 M0 82 L8 83 L12 84 L20 86 L26 88 L32 90 L38 92 L44 94 L50 96 L56 98 L64 99 L72 100 L76 100 L84 101 L92 102 L100 103 L104 104 L112 108 L116 110 L120 113 L124 117 L128 123 L129 128 L128 134 L124 137 L116 138 L108 136 L104 135 L96 133 L92 131 L84 129 L79 128 L72 126 L64 126 L56 126 L50 128 L44 130 L39 132 L32 135 L28 137 L23 140 L16 144 L12 145 L6 148 L0 150 M268 200 L272 198 L277 196 L284 192 L288 189 L292 187 L298 184 L304 182 L312 181 L320 181 L328 183 L333 184 L340 186 L346 188 L352 190 L356 192 L363 196 L368 200 M139 200 L144 196 L148 193 L152 191 L160 189 L164 188 L172 187 L180 187 L187 188 L192 189 L200 190 L206 192 L212 194 L218 196 L224 198 L231 200 M1280 190 L1273 192 L1268 193 L1260 196 L1256 197 L1248 198 L1240 199 L1232 200 M668 200 L672 199 L680 198 L688 197 L696 197 L704 197 L712 198 L720 200 M176 49 L168 50 L160 49 L156 47 L149 44 L144 41 L140 38 L136 35 L132 32 L127 28 L123 24 L120 19 L120 12 L124 9 L128 7 L136 4 L140 4 L148 3 L156 2 L164 2 L172 3 L177 4 L184 6 L189 8 L195 12 L199 16 L201 20 L201 28 L199 32 L196 36 L192 40 L187 44 L180 48 L176 49 M1007 0 L1000 2 L994 4 L988 5 L980 6 L972 6 L964 6 L956 6 L948 5 L940 4 L936 4 L928 3 L920 2 L912 0 M1280 7 L1272 7 L1264 7 L1256 8 L1252 8 L1244 9 L1236 9 L1228 10 L1220 10 L1212 10 L1204 9 L1197 8 L1192 7 L1185 4 L1180 2 M592 65 L584 66 L576 66 L568 65 L562 64 L556 61 L552 57 L552 54 L556 50 L561 48 L568 47 L576 46 L584 47 L592 48 L596 49 L602 52 L604 56 L602 60 L596 64 L592 65 M744 88 L736 89 L728 89 L720 89 L712 88 L708 87 L700 85 L696 82 L696 76 L700 73 L704 71 L710 68 L716 66 L724 65 L729 64 L736 63 L744 63 L751 64 L756 65 L764 68 L768 71 L770 76 L767 80 L760 84 L756 85 L748 87 L744 88 M1280 186 L1273 188 L1268 189 L1260 191 L1256 192 L1248 194 L1240 195 L1232 196 L1224 196 L1216 195 L1208 194 L1200 193 L1196 192 L1188 189 L1184 187 L1178 184 L1172 180 L1168 176 L1166 172 L1165 164 L1168 157 L1172 152 L1176 148 L1180 145 L1184 141 L1188 136 L1190 132 L1192 128 L1196 120 L1197 116 L1200 111 L1204 104 L1208 100 L1212 96 L1216 93 L1220 90 L1225 88 L1232 85 L1238 84 L1244 83 L1252 82 L1260 82 L1268 82 L1276 82 M0 88 L4 88 L12 90 L18 92 L24 94 L28 96 L35 100 L40 103 L44 106 L48 110 L50 116 L47 120 L42 124 L37 128 L32 131 L28 133 L24 136 L17 140 L12 143 L8 145 L0 148 M275 200 L280 197 L284 195 L290 192 L296 189 L300 187 L308 185 L316 185 L324 186 L332 188 L336 189 L344 192 L348 194 L353 196 L358 200 M152 200 L160 196 L164 194 L172 193 L179 192 L184 192 L188 192 L196 193 L204 194 L210 196 L216 198 L224 200 M993 0 L988 1 L980 2 L972 3 L964 3 L956 3 L948 2 L940 1 L933 0 M1280 4 L1272 4 L1264 4 L1256 5 L1248 5 L1240 6 L1232 6 L1224 6 L1216 6 L1208 5 L1204 4 L1196 2 L1191 0 M180 42 L172 43 L164 42 L160 40 L152 36 L148 33 L144 29 L140 25 L137 20 L140 12 L144 10 L149 8 L156 7 L164 7 L172 7 L178 8 L184 10 L188 12 L193 16 L196 22 L196 25 L193 32 L189 36 L184 40 L180 42 M580 60 L572 60 L568 59 L563 56 L568 52 L572 51 L580 51 L584 53 L584 59 L580 60 M748 81 L740 82 L732 83 L724 81 L719 80 L720 74 L724 72 L732 70 L740 69 L748 70 L754 72 L756 76 L752 79 L748 81 M1280 182 L1272 184 L1268 185 L1260 187 L1256 188 L1248 190 L1240 191 L1232 191 L1224 191 L1216 190 L1208 189 L1203 188 L1196 186 L1192 184 L1185 180 L1181 176 L1178 172 L1178 164 L1180 159 L1184 154 L1188 149 L1192 144 L1194 140 L1196 136 L1199 128 L1200 124 L1203 116 L1205 112 L1208 107 L1212 102 L1216 98 L1220 95 L1225 92 L1232 89 L1236 87 L1244 86 L1252 85 L1260 84 L1268 84 L1276 85 M0 93 L8 94 L13 96 L20 99 L24 102 L28 105 L32 109 L35 116 L32 124 L28 128 L24 132 L20 134 L16 137 L11 140 L4 143 L0 145 M282 200 L288 197 L292 195 L299 192 L304 191 L312 189 L320 190 L328 191 L332 192 L340 196 L344 198 M165 200 L172 198 L180 196 L184 196 L192 196 L196 196 L204 197 L212 199 M1280 1 L1272 1 L1264 1 L1256 2 L1248 2 L1240 2 L1232 2 L1224 2 L1216 1 L1209 0 M180 34 L172 35 L164 32 L160 30 L156 26 L154 20 L156 16 L164 13 L172 12 L180 14 L185 16 L188 20 L188 28 L184 32 L180 34 M1280 177 L1272 180 L1268 181 L1260 183 L1255 184 L1248 185 L1240 186 L1232 186 L1224 186 L1216 185 L1212 184 L1204 181 L1200 179 L1195 176 L1192 172 L1191 164 L1192 160 L1196 153 L1199 148 L1201 144 L1203 136 L1204 132 L1206 124 L1208 117 L1210 112 L1212 108 L1216 103 L1220 100 L1225 96 L1232 92 L1236 91 L1244 88 L1248 88 L1256 87 L1264 86 L1272 87 L1280 88 M0 98 L8 100 L12 102 L16 104 L21 108 L24 112 L26 120 L24 124 L20 129 L16 133 L12 136 L4 140 L0 142 M291 200 L296 198 L301 196 L308 195 L316 195 L324 196 L328 197 L333 200 M183 200 L188 199 L196 199 L203 200 M1280 173 L1272 176 L1268 177 L1260 178 L1252 180 L1248 180 L1240 181 L1232 181 L1226 180 L1220 179 L1212 176 L1208 173 L1204 168 L1204 164 L1204 160 L1207 152 L1208 148 L1210 140 L1210 132 L1211 124 L1212 120 L1215 112 L1217 108 L1221 104 L1225 100 L1231 96 L1236 94 L1241 92 L1248 90 L1256 89 L1264 89 L1272 89 L1280 90 M0 103 L4 104 L11 108 L15 112 L17 116 L17 124 L14 128 L10 132 L4 136 L0 138 M1280 168 L1272 171 L1268 172 L1260 173 L1252 174 L1244 175 L1236 174 L1228 172 L1224 170 L1220 167 L1217 160 L1216 152 L1216 144 L1216 136 L1216 132 L1216 127 L1217 120 L1220 112 L1222 108 L1226 104 L1231 100 L1236 97 L1240 95 L1248 93 L1254 92 L1260 91 L1268 91 L1275 92 L1280 93 M0 109 L5 112 L9 116 L9 124 L7 128 L2 132 M1280 164 L1276 165 L1268 167 L1260 168 L1256 168 L1248 168 L1244 168 L1236 165 L1232 162 L1228 158 L1226 152 L1224 146 L1223 140 L1221 132 L1221 124 L1223 116 L1224 112 L1228 107 L1232 103 L1237 100 L1244 97 L1248 96 L1256 94 L1264 94 L1272 94 L1280 95 M1280 158 L1275 160 L1268 161 L1260 162 L1252 161 L1246 160 L1240 157 L1236 153 L1233 148 L1231 144 L1228 138 L1226 132 L1226 124 L1227 116 L1229 112 L1232 108 L1237 104 L1244 100 L1248 99 L1256 97 L1264 96 L1272 97 L1280 98 M1280 153 L1272 155 L1264 156 L1256 155 L1248 152 L1244 150 L1240 146 L1236 141 L1233 136 L1232 132 L1230 124 L1232 116 L1234 112 L1237 108 L1243 104 L1248 102 L1255 100 L1260 99 L1268 99 L1275 100 L1280 101 M1280 147 L1276 149 L1268 150 L1260 150 L1254 148 L1248 145 L1244 141 L1240 136 L1238 132 L1236 127 L1236 120 L1237 116 L1240 111 L1244 108 L1251 104 L1256 103 L1264 102 L1272 102 L1279 104 M1280 141 L1272 144 L1268 144 L1264 144 L1256 142 L1252 140 L1247 136 L1244 132 L1241 124 L1242 116 L1245 112 L1251 108 L1256 106 L1264 105 L1272 106 L1280 108 M1280 134 L1276 137 L1268 138 L1260 137 L1256 135 L1252 132 L1248 126 L1247 120 L1249 116 L1254 112 L1260 110 L1268 109 L1276 111 L1280 113 M1272 130 L1264 130 L1259 128 L1256 124 L1256 120 L1260 116 L1268 115 L1272 116 L1277 120 L1276 127 L1272 130" stroke="rgba(185,215,255,0.42)" stroke-width="1" fill="none"/></svg></div>
<div class="a" style="left:0;top:84px;width:2px;height:599px;background:linear-gradient(180deg,#5677a0 0,#5f7fa8 90px,#98a6c2 160px,#a6aec4 599px)"></div>
<div id="navline" class="a"></div>
<div id="navline2" class="a"></div>

<!-- logo -->
<svg class="a" style="left:3px;top:24px" width="42" height="16" viewBox="0 0 42 16">
<path d="M1.2 7.6 Q3.8 8.8 5.4 11.2 Q8.5 4.5 15.5 1.2 Q9.5 5.5 6 12.6 Q4 9.8 1.2 7.6Z" fill="#5a5a5a" stroke="#6a6a6a" stroke-width="0.4"/>
<text x="10.5" y="11.3" font-family="Liberation Sans" font-size="6.8" fill="#3a3a3a" letter-spacing="-0.45">TrackWise</text>
<rect x="28" y="13" width="9" height="1" fill="#bbb"/>
</svg>

<!-- search -->
<div class="a" style="left:422px;top:16px;width:356px;height:28px;border:1px solid #e3e3e3;border-radius:4px;background:#fff"></div>
<svg class="a" style="left:439px;top:24px" width="11" height="11" viewBox="0 0 11 11"><circle cx="4.5" cy="4.5" r="3.6" stroke="#9a9a9a" stroke-width="1.4" fill="none"/><path d="M7.2 7.2 L10.2 10.2" stroke="#9a9a9a" stroke-width="1.5"/></svg>
<div class="a" style="left:464px;top:23px;font-size:10.8px;color:#7a7a7a;white-space:nowrap;line-height:13px">Search Dashboards and more...</div>

<!-- right icons -->
<div class="a" style="left:1162px;top:20px;width:33px;height:20px;border:1px solid #dedede;border-radius:3px"></div>
<div class="a" style="left:1180px;top:20px;width:1px;height:20px;background:#e4e4e4"></div>
<svg class="a" style="left:1164px;top:23px" width="14" height="14" viewBox="0 0 24 24"><path d="M12 1.5l3.1 7 7.4.6-5.6 4.9 1.7 7.3L12 17.4l-6.6 3.9 1.7-7.3L1.5 9.1l7.4-.6z" fill="#9a9a9a"/></svg>
<svg class="a" style="left:1184px;top:28px" width="8" height="5" viewBox="0 0 8 5"><path d="M0 0h8L4 5z" fill="#a5a5a5"/></svg>
<div class="a" style="left:1207px;top:23px;width:16px;height:16px;background:#a3a3a3;border-radius:3px"></div>
<div class="a" style="left:1209px;top:30px;width:12px;height:2px;background:#fff"></div>
<div class="a" style="left:1214px;top:25px;width:2px;height:12px;background:#fff"></div>
<svg class="a" style="left:1234px;top:21px" width="13" height="17" viewBox="0 0 13 17"><path d="M2.5 5 C2.5 1.5 10.5 1 10.5 5 C10.5 8 6.5 8 6.5 11.5" stroke="#a0a0a0" stroke-width="2.1" fill="none"/><circle cx="6.5" cy="15" r="1.3" fill="#a0a0a0"/></svg>
<svg class="a" style="left:1258px;top:20px" width="18" height="18" viewBox="0 0 18 18"><g fill="#a0a0a0"><circle cx="9" cy="9" r="6.6"/><circle cx="9" cy="2.4" r="2.4"/><circle cx="9" cy="15.6" r="2.4"/><circle cx="3.3" cy="5.7" r="2.4"/><circle cx="14.7" cy="5.7" r="2.4"/><circle cx="3.3" cy="12.3" r="2.4"/><circle cx="14.7" cy="12.3" r="2.4"/></g><circle cx="9" cy="9" r="3.6" fill="#fff"/><path d="M9.6 6.6 L7.8 9.3 L9.3 9.3 L8.4 11.4 L10.3 8.6 L8.8 8.6z" fill="#a0a0a0"/></svg>

<!-- nav -->
<div class="a" style="left:11px;top:58px;width:20px;height:20px">
<svg width="20" height="20" viewBox="0 0 20 20" fill="#6b6b6b"><circle cx="2.8" cy="2.5" r="2"/><circle cx="9.2" cy="2.5" r="2"/><circle cx="15.7" cy="2.5" r="2"/><circle cx="2.8" cy="9" r="2"/><circle cx="9.2" cy="9" r="2"/><circle cx="15.7" cy="9" r="2"/><circle cx="2.8" cy="15.3" r="2"/><circle cx="9.2" cy="15.3" r="2"/><circle cx="15.7" cy="15.3" r="2"/></svg>
</div>
<div class="a" style="left:47px;top:56.5px;font-size:15.3px;color:#808080;line-height:18px">Demo</div>
<div class="a" style="left:107px;top:50px;width:99px;height:30px;background:#e6eefa;border-top:3px solid #1b6ec0"></div>
<div class="a nv" style="left:117px">Dashboards</div>
<div class="a nv" style="left:215px">Reports</div>
<div class="a nv" style="left:293px">Quality Events</div>
<div class="a nv" style="left:403px">Complaints</div>
<div class="a nv" style="left:500px">CAPAs</div>
<div class="a nv" style="left:572px">Change Control</div>
<div class="a nv" style="left:688px">Audits</div>
<div class="a nv" style="left:760px">Dashboard</div>
<div class="a nv" style="left:833px">Corporate Documents</div>
<div class="a nv" style="left:981px">TMSDashboard</div>
<svg width="0" height="0" style="position:absolute"><defs><path id="chv" d="M1 1.5 L5 5.5 L9 1.5" stroke="#4a4a4a" stroke-width="1.6" fill="none"/></defs></svg>
<svg class="a chev" style="left:185px" viewBox="0 0 10 7"><use href="#chv"/></svg>
<svg class="a chev" style="left:264px" viewBox="0 0 10 7"><use href="#chv"/></svg>
<svg class="a chev" style="left:372px" viewBox="0 0 10 7"><use href="#chv"/></svg>
<svg class="a chev" style="left:470px" viewBox="0 0 10 7"><use href="#chv"/></svg>
<svg class="a chev" style="left:542px" viewBox="0 0 10 7"><use href="#chv"/></svg>
<svg class="a chev" style="left:659px" viewBox="0 0 10 7"><use href="#chv"/></svg>
<svg class="a chev" style="left:731px" viewBox="0 0 10 7"><use href="#chv"/></svg>
<svg class="a chev" style="left:952px" viewBox="0 0 10 7"><use href="#chv"/></svg>

<!-- cards -->
<div class="a card" style="left:2px;top:97px;width:434px;height:288px"></div>
<div class="a card" style="left:446.5px;top:97px;width:434.2px;height:288px"></div>
<div class="a card" style="left:891px;top:97px;width:400px;height:288px"></div>
<div class="a card" style="left:2px;top:395px;width:434px;height:288px"></div>
<div class="a card" style="left:446.5px;top:395px;width:434.2px;height:288px"></div>
<div class="a card" style="left:891px;top:395px;width:400px;height:288px"></div>

<svg class="a" style="left:0;top:0" width="1280" height="720" viewBox="0 0 1280 720" font-family="Liberation Sans"><text x="15.7" y="122.3" font-size="13" fill="#424242" text-anchor="start" >Events per Month</text>
<text x="15.7" y="141.1" font-size="10.4" fill="#6c6c6c" text-anchor="start" >Events per Month</text>
<text x="15.5" y="366.8" font-size="9.8" fill="#3d6392" text-anchor="start" >View Report</text>
<g transform="translate(414,111.4)" fill="#5a5a5a" stroke="#5a5a5a" stroke-width="1.2"><path d="M0 0 L3.4 0 L0 3.4Z M10 0 L6.6 0 L10 3.4Z M0 9.5 L3.4 9.5 L0 6.1Z M10 9.5 L6.6 9.5 L10 6.1Z" stroke="none"/><path d="M1.5 1.5 L4.3 4.3 M8.5 1.5 L5.7 4.3 M1.5 8 L4.3 5.2 M8.5 8 L5.7 5.2" fill="none"/></g>
<rect x="96.0" y="208.3" width="326.0" height="1.0" fill="#ececec" />
<rect x="57.0" y="262.0" width="366.0" height="1.0" fill="#ececec" />
<rect x="57.8" y="155.1" width="33.4" height="107.4" fill="#0a8fe0" />
<text transform="translate(78.5,277.5) rotate(-45)" font-size="10" fill="#656565" text-anchor="end">January 2017</text>
<rect x="99.3" y="244.6" width="33.4" height="17.9" fill="#0a8fe0" />
<text transform="translate(120.0,277.5) rotate(-45)" font-size="10" fill="#656565" text-anchor="end">March 2017</text>
<rect x="140.8" y="244.6" width="33.4" height="17.9" fill="#0a8fe0" />
<text transform="translate(161.5,277.5) rotate(-45)" font-size="10" fill="#656565" text-anchor="end">April 2017</text>
<rect x="182.3" y="173.0" width="33.4" height="89.5" fill="#0a8fe0" />
<text transform="translate(203.0,277.5) rotate(-45)" font-size="10" fill="#656565" text-anchor="end">May 2017</text>
<rect x="223.8" y="226.7" width="33.4" height="35.8" fill="#0a8fe0" />
<text transform="translate(244.5,277.5) rotate(-45)" font-size="10" fill="#656565" text-anchor="end">June 2017</text>
<rect x="265.3" y="226.7" width="33.4" height="35.8" fill="#0a8fe0" />
<text transform="translate(286.0,277.5) rotate(-45)" font-size="10" fill="#656565" text-anchor="end">July 2017</text>
<rect x="306.8" y="226.7" width="33.4" height="35.8" fill="#0a8fe0" />
<text transform="translate(327.5,277.5) rotate(-45)" font-size="10" fill="#656565" text-anchor="end">November 2017</text>
<rect x="348.3" y="244.6" width="33.4" height="17.9" fill="#0a8fe0" />
<text transform="translate(369.0,277.5) rotate(-45)" font-size="10" fill="#656565" text-anchor="end">December 2017</text>
<rect x="389.8" y="173.0" width="33.4" height="89.5" fill="#0a8fe0" />
<text transform="translate(410.5,277.5) rotate(-45)" font-size="10" fill="#656565" text-anchor="end">January 2018</text>
<text transform="translate(52.2,158.8) rotate(-90)" font-size="10" fill="#bdbdbd" text-anchor="middle">6</text>
<text transform="translate(52.2,207.2) rotate(-90)" font-size="10" fill="#bdbdbd" text-anchor="middle">3</text>
<text transform="translate(52.2,257.2) rotate(-90)" font-size="10" fill="#bdbdbd" text-anchor="middle">0</text>
<rect x="40.0" y="148.0" width="16.0" height="6.6" fill="#fff" />
<text transform="translate(23.6,208.4) rotate(-90)" font-size="10" fill="#ababab" text-anchor="middle">Record Count</text>
<text x="177.9" y="347.5" font-size="10" fill="#8c8c8c" text-anchor="start" >Quality Event: Created Date</text>
<text x="459.7" y="122.3" font-size="13" fill="#424242" text-anchor="start" >Events by Type</text>
<text x="459.7" y="141.1" font-size="10.4" fill="#6c6c6c" text-anchor="start" >Events by Type</text>
<text x="459.5" y="366.8" font-size="9.8" fill="#3d6392" text-anchor="start" >View Report</text>
<g transform="translate(858.5,111.4)" fill="#5a5a5a" stroke="#5a5a5a" stroke-width="1.2"><path d="M0 0 L3.4 0 L0 3.4Z M10 0 L6.6 0 L10 3.4Z M0 9.5 L3.4 9.5 L0 6.1Z M10 9.5 L6.6 9.5 L10 6.1Z" stroke="none"/><path d="M1.5 1.5 L4.3 4.3 M8.5 1.5 L5.7 4.3 M1.5 8 L4.3 5.2 M8.5 8 L5.7 5.2" fill="none"/></g>
<path d="M586.30 175.90 A86.5 86.5 0 0 1 599.70 176.94 L594.35 211.03 A52 52 0 0 0 586.30 210.40Z" fill="#0a8fe0"/>
<path d="M599.70 176.94 A86.5 86.5 0 0 1 588.99 348.86 L587.92 314.37 A52 52 0 0 0 594.35 211.03Z" fill="#152f62"/>
<path d="M588.99 348.86 A86.5 86.5 0 0 1 518.43 208.77 L545.50 230.16 A52 52 0 0 0 587.92 314.37Z" fill="#6bd3de"/>
<path d="M518.43 208.77 A86.5 86.5 0 0 1 545.01 186.39 L561.48 216.71 A52 52 0 0 0 545.50 230.16Z" fill="#05979f"/>
<path d="M545.01 186.39 A86.5 86.5 0 0 1 549.81 183.97 L564.36 215.25 A52 52 0 0 0 561.48 216.71Z" fill="#e3cb86"/>
<path d="M549.81 183.97 A86.5 86.5 0 0 1 583.61 175.94 L584.68 210.43 A52 52 0 0 0 564.36 215.25Z" fill="#f0a008"/>
<path d="M583.61 175.94 A86.5 86.5 0 0 1 586.30 175.90 L586.30 210.40 A52 52 0 0 0 584.68 210.43Z" fill="#cc4a3c"/>
<text x="654.8" y="270.0" font-size="9.5" fill="#fff" text-anchor="middle" >95</text>
<text x="525.2" y="296.5" font-size="9.5" fill="#fff" text-anchor="middle" >73</text>
<text x="542.3" y="213.3" font-size="9.5" fill="#fff" text-anchor="middle" >13</text>
<text x="570.6" y="199.1" font-size="9.5" fill="#fbefd0" text-anchor="middle" >13</text>
<text x="586.4" y="269.0" font-size="18" fill="#333" text-anchor="middle" >202</text>
<text x="586.2" y="164.0" font-size="10" fill="#8c8c8c" text-anchor="middle" >Record Count</text>
<text x="857.8" y="172.2" font-size="10" fill="#656565" text-anchor="end" >Type</text>
<rect x="720.0" y="177.7" width="143.0" height="1.4" fill="#c6c6c6" />
<text x="840.7" y="191.7" font-size="10" fill="#656565" text-anchor="end" >Product</text>
<circle cx="853.3" cy="188.2" r="4.9" fill="#0a8fe0"/>
<text x="840.7" y="209.6" font-size="10" fill="#656565" text-anchor="end" >Process</text>
<circle cx="853.3" cy="206.1" r="4.9" fill="#152f62"/>
<text x="840.7" y="227.5" font-size="10" fill="#656565" text-anchor="end" >Systemic<tspan dx="1.9">/</tspan><tspan dx="1.9">QMS</tspan></text>
<circle cx="853.3" cy="224.0" r="4.9" fill="#6bd3de"/>
<text x="840.7" y="245.4" font-size="10" fill="#656565" text-anchor="end" >Audit</text>
<circle cx="853.3" cy="241.9" r="4.9" fill="#05979f"/>
<text x="840.7" y="263.3" font-size="10" fill="#656565" text-anchor="end" >Facility<tspan dx="1.9">/</tspan><tspan dx="1.9">Utility</tspan><tspan dx="1.9">/</tspan><tspan dx="1.9">Equipment</tspan></text>
<circle cx="853.3" cy="259.8" r="4.9" fill="#e3cb86"/>
<text x="840.7" y="281.2" font-size="10" fill="#656565" text-anchor="end" >OOS</text>
<circle cx="853.3" cy="277.7" r="4.9" fill="#f0a008"/>
<text x="840.7" y="299.1" font-size="10" fill="#656565" text-anchor="end" >Supplier<tspan dx="1.9">/</tspan><tspan dx="1.9">Raw material</tspan></text>
<circle cx="853.3" cy="295.6" r="4.9" fill="#cc4a3c"/>
<text x="904.7" y="122.3" font-size="13" fill="#424242" text-anchor="start" >Events by Owner</text>
<text x="904.7" y="141.1" font-size="10.4" fill="#6c6c6c" text-anchor="start" >Events by Owner</text>
<text x="904.5" y="366.8" font-size="9.8" fill="#3d6392" text-anchor="start" >View Report</text>
<rect x="946.0" y="206.6" width="340.0" height="1.0" fill="#ececec" />
<rect x="946.0" y="260.8" width="340.0" height="1.0" fill="#ececec" />
<rect x="948.0" y="179.7" width="23.0" height="81.6" fill="#0a8fe0" />
<text transform="translate(963.0,276.5) rotate(-45)" font-size="10" fill="#656565" text-anchor="end">Bastian Schar...</text>
<rect x="974.2" y="195.7" width="23.0" height="65.6" fill="#0a8fe0" />
<text transform="translate(989.2,276.5) rotate(-45)" font-size="10" fill="#656565" text-anchor="end">Chelsea Madden</text>
<rect x="1000.4" y="199.2" width="23.0" height="62.1" fill="#0a8fe0" />
<text transform="translate(1015.4,276.5) rotate(-45)" font-size="10" fill="#656565" text-anchor="end">Krista Yahl</text>
<rect x="1026.6" y="218.8" width="23.0" height="42.5" fill="#0a8fe0" />
<text transform="translate(1041.6,276.5) rotate(-45)" font-size="10" fill="#656565" text-anchor="end">Michael Kline</text>
<rect x="1052.8" y="229.6" width="23.0" height="31.7" fill="#0a8fe0" />
<text transform="translate(1067.8,276.5) rotate(-45)" font-size="10" fill="#656565" text-anchor="end">Melvin You</text>
<rect x="1079.0" y="242.2" width="23.0" height="19.1" fill="#0a8fe0" />
<text transform="translate(1094.0,276.5) rotate(-45)" font-size="10" fill="#656565" text-anchor="end">Sagie Twig</text>
<rect x="1105.2" y="245.7" width="23.0" height="15.6" fill="#0a8fe0" />
<text transform="translate(1120.2,276.5) rotate(-45)" font-size="10" fill="#656565" text-anchor="end">David Hess</text>
<rect x="1131.4" y="245.7" width="23.0" height="15.6" fill="#0a8fe0" />
<text transform="translate(1146.4,276.5) rotate(-45)" font-size="10" fill="#656565" text-anchor="end">Katie Dowling</text>
<rect x="1157.6" y="250.9" width="23.0" height="10.4" fill="#0a8fe0" />
<text transform="translate(1172.6,276.5) rotate(-45)" font-size="10" fill="#656565" text-anchor="end">Tom Middleton</text>
<rect x="1183.8" y="258.2" width="23.0" height="3.1" fill="#0a8fe0" />
<text transform="translate(1198.8,276.5) rotate(-45)" font-size="10" fill="#656565" text-anchor="end">Joe Goodman</text>
<rect x="1210.0" y="258.2" width="23.0" height="3.1" fill="#0a8fe0" />
<text transform="translate(1225.0,276.5) rotate(-45)" font-size="10" fill="#656565" text-anchor="end">Yasuo Kono</text>
<rect x="1236.2" y="259.5" width="23.0" height="1.8" fill="#0a8fe0" />
<text transform="translate(1251.2,276.5) rotate(-45)" font-size="10" fill="#656565" text-anchor="end">Andrea Chan</text>
<rect x="1262.4" y="259.5" width="23.0" height="1.8" fill="#0a8fe0" />
<text transform="translate(1277.4,276.5) rotate(-45)" font-size="10" fill="#656565" text-anchor="end">Carl Ning</text>
<text transform="translate(1303.6,276.5) rotate(-45)" font-size="10" fill="#656565" text-anchor="end">Sujatha Sriniv...</text>
<text x="941.0" y="161.5" font-size="10" fill="#c2c2c2" text-anchor="end" >60</text>
<text x="941.0" y="211.0" font-size="10" fill="#c2c2c2" text-anchor="end" >30</text>
<text x="941.0" y="259.6" font-size="10" fill="#c2c2c2" text-anchor="end" >0</text>
<rect x="925.0" y="148.0" width="20.0" height="7.2" fill="#fff" />
<text transform="translate(912.5,208.4) rotate(-90)" font-size="10" fill="#ababab" text-anchor="middle">Record Count</text>
<text x="1067.7" y="347.7" font-size="10" fill="#8c8c8c" text-anchor="start" >Quality Event: Owner Name</text>
<text x="15.7" y="420.3" font-size="13" fill="#424242" text-anchor="start" >Events by Status</text>
<text x="15.7" y="439.1" font-size="10.4" fill="#6c6c6c" text-anchor="start" >Events by Status</text>
<text x="15.5" y="664.8" font-size="9.8" fill="#3d6392" text-anchor="start" >View Report</text>
<g transform="translate(414,409.4)" fill="#5a5a5a" stroke="#5a5a5a" stroke-width="1.2"><path d="M0 0 L3.4 0 L0 3.4Z M10 0 L6.6 0 L10 3.4Z M0 9.5 L3.4 9.5 L0 6.1Z M10 9.5 L6.6 9.5 L10 6.1Z" stroke="none"/><path d="M1.5 1.5 L4.3 4.3 M8.5 1.5 L5.7 4.3 M1.5 8 L4.3 5.2 M8.5 8 L5.7 5.2" fill="none"/></g>
<path d="M135.00 474.20 A86.7 86.7 0 0 1 211.21 519.56 L180.71 536.10 A52 52 0 0 0 135.00 508.90Z" fill="#0a8fe0"/>
<path d="M211.21 519.56 A86.7 86.7 0 0 1 189.25 628.53 L167.54 601.46 A52 52 0 0 0 180.71 536.10Z" fill="#152f62"/>
<path d="M189.25 628.53 A86.7 86.7 0 0 1 66.30 613.79 L93.80 592.62 A52 52 0 0 0 167.54 601.46Z" fill="#6bd3de"/>
<path d="M66.30 613.79 A86.7 86.7 0 0 1 48.32 559.18 L83.01 559.87 A52 52 0 0 0 93.80 592.62Z" fill="#05979f"/>
<path d="M48.32 559.18 A86.7 86.7 0 0 1 53.21 532.15 L85.94 543.66 A52 52 0 0 0 83.01 559.87Z" fill="#e3cb86"/>
<path d="M53.21 532.15 A86.7 86.7 0 0 1 70.72 502.72 L96.45 526.00 A52 52 0 0 0 85.94 543.66Z" fill="#f0a008"/>
<path d="M70.72 502.72 A86.7 86.7 0 0 1 128.11 474.47 L130.87 509.06 A52 52 0 0 0 96.45 526.00Z" fill="#cc4a3c"/>
<path d="M128.11 474.47 A86.7 86.7 0 0 1 135.00 474.20 L135.00 508.90 A52 52 0 0 0 130.87 509.06Z" fill="#f7b46a"/>
<text x="169.9" y="505.2" font-size="9.5" fill="#fff" text-anchor="middle" >27</text>
<text x="202.1" y="577.6" font-size="9.5" fill="#fff" text-anchor="middle" >35</text>
<text x="126.7" y="632.1" font-size="9.5" fill="#fff" text-anchor="middle" >40</text>
<text x="69.8" y="585.5" font-size="9.5" fill="#fff" text-anchor="middle" >17</text>
<text x="67.5" y="551.9" font-size="9.5" fill="#5a4a2a" text-anchor="middle" >8</text>
<text x="76.0" y="529.1" font-size="9.5" fill="#fbefd0" text-anchor="middle" >10</text>
<text x="104.7" y="502.6" font-size="9.5" fill="#fff" text-anchor="middle" >19</text>
<text x="134.9" y="567.4" font-size="18" fill="#333" text-anchor="middle" >158</text>
<text x="134.9" y="462.0" font-size="10" fill="#8c8c8c" text-anchor="middle" >Record Count</text>
<text x="413.2" y="470.0" font-size="10" fill="#656565" text-anchor="end" >Workflow Status</text>
<rect x="260.0" y="475.6" width="157.0" height="1.4" fill="#c6c6c6" />
<text x="395.0" y="489.8" font-size="10" fill="#656565" text-anchor="end" >CAPA Plan</text>
<circle cx="408.75" cy="486.2" r="4.9" fill="#0a8fe0"/>
<text x="395.0" y="507.6" font-size="10" fill="#656565" text-anchor="end" >Investigation and Root Cause</text>
<circle cx="408.75" cy="504.1" r="4.9" fill="#152f62"/>
<text x="395.0" y="525.5" font-size="10" fill="#656565" text-anchor="end" >Opened</text>
<circle cx="408.75" cy="522.0" r="4.9" fill="#6bd3de"/>
<text x="395.0" y="543.3" font-size="10" fill="#656565" text-anchor="end" >Pending Actions Completion</text>
<circle cx="408.75" cy="539.8" r="4.9" fill="#05979f"/>
<text x="395.0" y="561.2" font-size="10" fill="#656565" text-anchor="end" >Pending Approval</text>
<circle cx="408.75" cy="557.7" r="4.9" fill="#e3cb86"/>
<text x="395.0" y="579.0" font-size="10" fill="#656565" text-anchor="end" >Pending Final Approval</text>
<circle cx="408.75" cy="575.5" r="4.9" fill="#f0a008"/>
<text x="395.0" y="596.9" font-size="10" fill="#656565" text-anchor="end" >Review and Assessment</text>
<circle cx="408.75" cy="593.4" r="4.9" fill="#cc4a3c"/>
<text x="395.0" y="614.8" font-size="10" fill="#656565" text-anchor="end" >Supervisor Review</text>
<circle cx="408.75" cy="611.3" r="4.9" fill="#f7b46a"/>
<text x="459.7" y="420.3" font-size="13" fill="#424242" text-anchor="start" >Events by Type</text>
<text x="459.7" y="439.1" font-size="10.4" fill="#6c6c6c" text-anchor="start" >Events by Type</text>
<text x="459.5" y="664.8" font-size="9.8" fill="#3d6392" text-anchor="start" >View Report</text>
<g transform="translate(858.5,409.4)" fill="#5a5a5a" stroke="#5a5a5a" stroke-width="1.2"><path d="M0 0 L3.4 0 L0 3.4Z M10 0 L6.6 0 L10 3.4Z M0 9.5 L3.4 9.5 L0 6.1Z M10 9.5 L6.6 9.5 L10 6.1Z" stroke="none"/><path d="M1.5 1.5 L4.3 4.3 M8.5 1.5 L5.7 4.3 M1.5 8 L4.3 5.2 M8.5 8 L5.7 5.2" fill="none"/></g>
<rect x="460.0" y="452.7" width="408.0" height="1.0" fill="#e2e2e2" />
<text x="466.4" y="467.7" font-size="10" fill="#444" text-anchor="start" >TYPE</text>
<text x="860.7" y="467.7" font-size="10" fill="#444" text-anchor="end" letter-spacing="-0.5">RECORD COUNT</text>
<rect x="460.0" y="474.3" width="408.0" height="21.1" fill="#f3f4f8" />
<text x="466.4" y="488.3" font-size="10" fill="#505050" text-anchor="start" >Process</text>
<text x="860.7" y="488.3" font-size="10" fill="#505050" text-anchor="end" >95</text>
<text x="466.4" y="509.4" font-size="10" fill="#505050" text-anchor="start" >Systemic<tspan dx="1.9">/</tspan><tspan dx="1.9">QMS</tspan></text>
<text x="860.7" y="509.4" font-size="10" fill="#505050" text-anchor="end" >73</text>
<rect x="460.0" y="516.5" width="408.0" height="21.1" fill="#f3f4f8" />
<text x="466.4" y="530.5" font-size="10" fill="#505050" text-anchor="start" >OOS</text>
<text x="860.7" y="530.5" font-size="10" fill="#505050" text-anchor="end" >13</text>
<text x="466.4" y="551.6" font-size="10" fill="#505050" text-anchor="start" >Audit</text>
<text x="860.7" y="551.6" font-size="10" fill="#505050" text-anchor="end" >13</text>
<rect x="460.0" y="558.7" width="408.0" height="21.1" fill="#f3f4f8" />
<text x="466.4" y="572.7" font-size="10" fill="#505050" text-anchor="start" >Product</text>
<text x="860.7" y="572.7" font-size="10" fill="#505050" text-anchor="end" >5</text>
<text x="466.4" y="593.8" font-size="10" fill="#505050" text-anchor="start" >Facility<tspan dx="1.9">/</tspan><tspan dx="1.9">Utility</tspan><tspan dx="1.9">/</tspan><tspan dx="1.9">Equipment</tspan></text>
<text x="860.7" y="593.8" font-size="10" fill="#505050" text-anchor="end" >2</text>
<rect x="460.0" y="600.9" width="408.0" height="21.1" fill="#f3f4f8" />
<text x="466.4" y="614.9" font-size="10" fill="#505050" text-anchor="start" >Supplier<tspan dx="1.9">/</tspan><tspan dx="1.9">Raw material</tspan></text>
<text x="860.7" y="614.9" font-size="10" fill="#505050" text-anchor="end" >1</text>
<text x="904.7" y="420.3" font-size="13" fill="#424242" text-anchor="start" >Events by Risk Level</text>
<text x="904.7" y="439.1" font-size="10.4" fill="#6c6c6c" text-anchor="start" >Events by Risk Level</text>
<text x="904.5" y="664.8" font-size="9.8" fill="#3d6392" text-anchor="start" >View Report</text>
<path d="M1001.1 454.6 L1143.6 454.6 L1141.5 466 L1003.2 466Z" fill="#0a8fe0"/>
<path d="M1003.2 466 L1141.5 466 L1140.3 472.7 L1004.4 472.7Z" fill="#152f62"/>
<path d="M1004.4 472.7 L1140.3 472.7 L1109.0 646.2 L1036.0 646.2Z" fill="#6bd3de"/>
<text x="1071.5" y="564.6" font-size="18" fill="#fff" text-anchor="middle" >177</text>
<text x="1251.9" y="469.2" font-size="10" fill="#656565" text-anchor="start" >Overall</text>
<rect x="1244.0" y="476.1" width="40.0" height="1.4" fill="#c6c6c6" />
<text x="1254.7" y="489.3" font-size="10" fill="#656565" text-anchor="start" >Critical</text>
<text x="1259.9" y="507.4" font-size="10" fill="#656565" text-anchor="start" >Major</text>
<text x="1259.4" y="524.7" font-size="10" fill="#656565" text-anchor="start" >Minor</text></svg>

<div id="foot" class="a"></div>
<svg class="a" style="left:3px;top:699px" width="9" height="11" viewBox="0 0 9 11"><path d="M4 0 L1 6 L4 6 L2.5 11 L8 4 L5 4 L6.5 0z" fill="#333"/></svg>
<div class="a" style="left:19px;top:697px;font-size:11px;color:#505050;line-height:13px">Recent Items</div>
</body></html>
